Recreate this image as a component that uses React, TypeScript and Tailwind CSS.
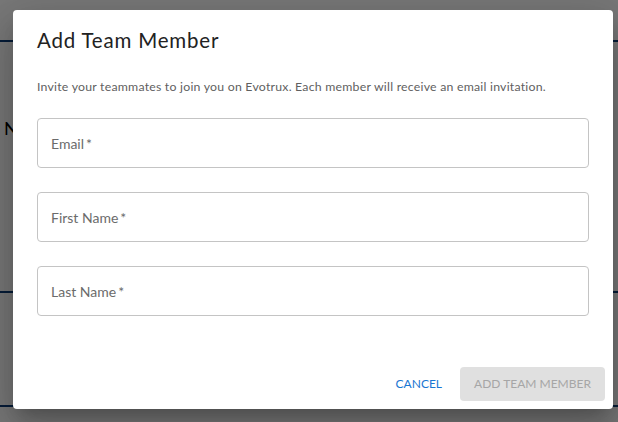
import React from 'react';

const fields = ['Email', 'First Name', 'Last Name'];

function Backdrop() {
  // page behind the modal, dimmed by the overlay
  return (
    <div className="absolute inset-0 bg-white">
      <div className="absolute left-0 right-0 top-[40px] h-[2px] bg-[#0d3c78]" />
      <div className="absolute left-[4px] top-[119px] text-[18px] leading-none text-black">N</div>
      <div className="absolute left-0 right-0 top-[291px] h-[2px] bg-[#0d3c78]" />
      <div className="absolute left-0 right-0 top-[405px] h-[2px] bg-[#0d3c78]" />
      <div className="absolute inset-0 bg-black/[0.53]" />
    </div>
  );
}

function OutlinedField({ label }: { label: string }) {
  return (
    <div className="flex h-[50px] items-center rounded-[4px] border border-[#c4c4c4] px-[13px]">
      <span className="text-[14px] text-[#6b6b6b]">
        {label}
        <span className="ml-[2px]">*</span>
      </span>
    </div>
  );
}

export default function App() {
  return (
    <div
      className="relative h-[422px] w-full overflow-hidden"
      style={{ fontFamily: 'Lato, "Open Sans", sans-serif' }}
    >
      <Backdrop />
      <div className="absolute inset-0 flex justify-start pl-[13px] pt-[10px]">
        <div className="flex h-[399px] w-[600px] flex-col rounded-[4px] bg-white shadow-[0_11px_15px_-7px_rgba(0,0,0,0.2),0_24px_38px_3px_rgba(0,0,0,0.14),0_9px_46px_8px_rgba(0,0,0,0.12)]">
          <h2 className="px-6 pt-[14px] text-[20.5px] leading-[32px] tracking-[0.8px] text-[#222]">
            Add Team Member
          </h2>
          <div className="flex flex-1 flex-col px-6 pt-[22px]">
            <p className="text-[12.3px] leading-[18px] tracking-[0.22px] text-[#5f5f5f]">
              Invite your teammates to join you on Evotrux. Each member will receive an email invitation.
            </p>
            <div className="mt-[22px] flex flex-col gap-[24px]">
              {fields.map((f) => (
                <OutlinedField key={f} label={f} />
              ))}
            </div>
          </div>
          <div className="flex items-center justify-end gap-[10px] p-2">
            <button className="rounded-[4px] px-2 py-[6px] text-[12px] uppercase text-[#1976d2]">
              Cancel
            </button>
            <button
              disabled
              className="h-[34px] w-[145px] rounded-[4px] bg-[#e0e0e0] text-[12px] uppercase text-[#a6a6a6]"
            >
              Add Team Member
            </button>
          </div>
        </div>
      </div>
    </div>
  );
}
